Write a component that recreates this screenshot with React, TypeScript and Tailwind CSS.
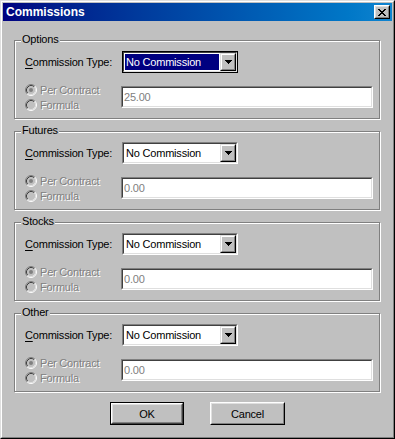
const groups = [
  { name: 'Options', amount: '25.00', focused: true },
  { name: 'Futures', amount: '0.00', focused: false },
  { name: 'Stocks', amount: '0.00', focused: false },
  { name: 'Other', amount: '0.00', focused: false },
];

const disabled = 'text-[#808080] [text-shadow:1px_1px_0_#fff]';

const Radio = ({ checked }: { checked?: boolean }) => (
  <svg width="12" height="12" viewBox="0 0 12 12" className="shrink-0">
    <circle cx="6" cy="6" r="5" fill="#c0c0c0" />
    <path d="M9.89 2.11 A5.5 5.5 0 0 0 2.11 9.89" stroke="#808080" fill="none" />
    <path d="M2.11 9.89 A5.5 5.5 0 0 0 9.89 2.11" stroke="#ffffff" fill="none" />
    <path d="M9.18 2.82 A4.5 4.5 0 0 0 2.82 9.18" stroke="#404040" fill="none" />
    <path d="M2.82 9.18 A4.5 4.5 0 0 0 9.18 2.82" stroke="#dfdfdf" fill="none" />
    {checked && <circle cx="6" cy="6" r="2" fill="#808080" />}
  </svg>
);

const DownArrow = () => (
  <svg width="7" height="4" viewBox="0 0 7 4" shapeRendering="crispEdges">
    <rect x="0" y="0" width="7" height="1" fill="#000" />
    <rect x="1" y="1" width="5" height="1" fill="#000" />
    <rect x="2" y="2" width="3" height="1" fill="#000" />
    <rect x="3" y="3" width="1" height="1" fill="#000" />
  </svg>
);

const Combo = ({ focused }: { focused: boolean }) => (
  <div
    className={
      focused
        ? 'w-[116px] h-[22px] border border-black'
        : 'w-[116px] h-[22px] border border-t-[#808080] border-l-[#808080] border-b-white border-r-white'
    }
  >
    <div className="h-full flex border border-t-[#404040] border-l-[#404040] border-b-[#dfdfdf] border-r-[#dfdfdf] bg-white">
      <div className="flex-1 p-[1px] min-w-0">
        <div
          className={
            focused
              ? 'h-full flex items-center px-[1px] bg-[#000080] text-white whitespace-nowrap'
              : 'h-full flex items-center px-[1px] text-black whitespace-nowrap'
          }
        >
          No Commission
        </div>
      </div>
      <div className="w-[16px] h-full border border-t-[#dfdfdf] border-l-[#dfdfdf] border-b-black border-r-black">
        <div className="h-full flex items-center justify-center bg-[#c0c0c0] border border-t-white border-l-white border-b-[#808080] border-r-[#808080]">
          <DownArrow />
        </div>
      </div>
    </div>
  </div>
);

const TextBox = ({ value }: { value: string }) => (
  <div className="w-[252px] h-[22px] border border-t-[#808080] border-l-[#808080] border-b-white border-r-white">
    <div className="h-full flex items-center px-[1px] bg-white text-[#808080] border border-t-[#404040] border-l-[#404040] border-b-[#dfdfdf] border-r-[#dfdfdf]">
      {value}
    </div>
  </div>
);

const Group = ({ name, amount, focused }: { name: string; amount: string; focused: boolean }) => (
  <div className="relative ml-[11px] w-[366px] h-[79px] border border-[#808080] shadow-[inset_1px_1px_0_#fff,1px_1px_0_#fff]">
    <span className="absolute left-[6px] top-[-9px] bg-[#c0c0c0] px-[1px] leading-[14px]">{name}</span>
    <div className="flex items-center h-[22px] mt-[10px] pl-[10px]">
      <span className="w-[97px] whitespace-nowrap">
        <span className="underline underline-offset-2">C</span>ommission Type:
      </span>
      <Combo focused={focused} />
    </div>
    <div className="flex items-center h-[22px] mt-[13px] pl-[10px]">
      <div className="w-[96px] flex flex-col">
        <div className="flex items-center gap-[3px] h-[15px]">
          <Radio checked />
          <span className={disabled}>Per Contract</span>
        </div>
        <div className="flex items-center gap-[3px] h-[15px]">
          <Radio />
          <span className={disabled}>Formula</span>
        </div>
      </div>
      <TextBox value={amount} />
    </div>
  </div>
);

export default function App() {
  return (
    <div className="w-[395px] h-[439px] bg-[#c0c0c0] border border-t-[#dfdfdf] border-l-[#dfdfdf] border-b-black border-r-black text-[11px] leading-[14px] tracking-[-0.2px] text-black font-['Liberation_Sans',Arial,sans-serif]">
      <div className="h-full p-[1px] border border-t-white border-l-white border-b-[#808080] border-r-[#808080]">
        {/* Title bar */}
        <div className="h-[18px] flex items-center justify-between pl-[3px] pr-[2px] bg-gradient-to-r from-[#000080] to-[#1084d0]">
          <span className="text-white font-bold text-[12px] tracking-normal">Commissions</span>
          <div className="w-[16px] h-[14px] border border-t-white border-l-white border-b-black border-r-black">
            <div className="h-full flex items-center justify-center bg-[#c0c0c0] border border-t-[#dfdfdf] border-l-[#dfdfdf] border-b-[#808080] border-r-[#808080]">
              <svg width="8" height="7" viewBox="0 0 8 7" shapeRendering="crispEdges">
                <path d="M0 0h2v1h-2zM6 0h2v1h-2zM1 1h2v1h-2zM5 1h2v1h-2zM2 2h4v1h-4zM3 3h2v1h-2zM2 4h4v1h-4zM1 5h2v1h-2zM5 5h2v1h-2zM0 6h2v1h-2zM6 6h2v1h-2z" fill="#000" />
              </svg>
            </div>
          </div>
        </div>

        <div className="flex flex-col gap-[12px] mt-[19px]">
          {groups.map((g) => (
            <Group key={g.name} {...g} />
          ))}
        </div>

        {/* Buttons */}
        <div className="flex justify-center gap-[26px] mt-[10px]">
          <div className="w-[74px] h-[23px] border border-black">
            <div className="h-full border border-t-white border-l-white border-b-[#404040] border-r-[#404040]">
              <div className="h-full flex items-center justify-center border border-t-[#dfdfdf] border-l-[#dfdfdf] border-b-[#808080] border-r-[#808080]">
                OK
              </div>
            </div>
          </div>
          <div className="w-[75px] h-[23px] border border-t-white border-l-white border-b-black border-r-black">
            <div className="h-full flex items-center justify-center border border-t-[#dfdfdf] border-l-[#dfdfdf] border-b-[#808080] border-r-[#808080]">
              Cancel
            </div>
          </div>
        </div>
      </div>
    </div>
  );
}
